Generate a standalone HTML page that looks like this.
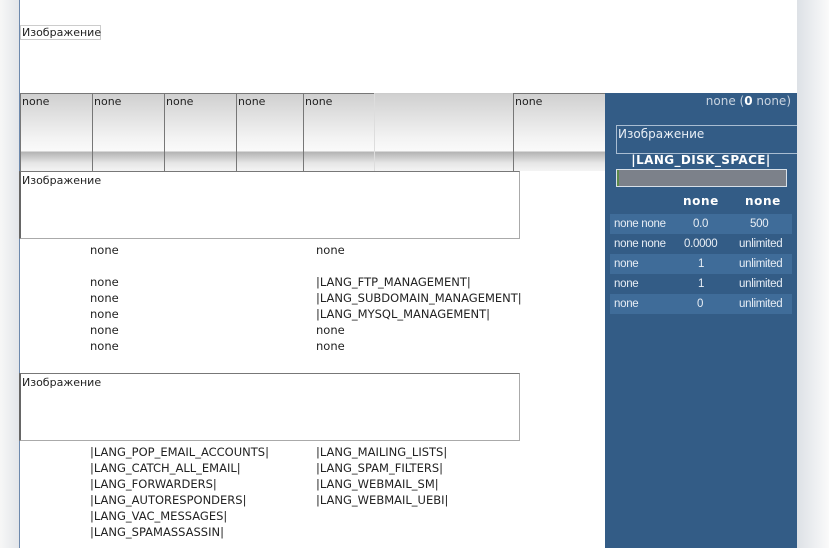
<!DOCTYPE html>
<html><head><meta charset="utf-8"><style>
*{margin:0;padding:0;box-sizing:border-box}
body{width:829px;height:548px;overflow:hidden;background:#f0f1f3;font-family:"DejaVu Sans","Liberation Sans",sans-serif;font-size:11.5px;color:#222;position:relative}
.a{position:absolute}
.page{left:19px;top:0;width:778px;height:548px;background:#fff;border-left:1px solid #6d89ad}
.bar{left:20px;top:93px;width:585px;height:78px;background:linear-gradient(#cfcfcf 0px,#f3f3f3 45px,#fafafa 58px,#b3b3b3 59px,#e6e6e6 70px,#f4f4f4 78px)}
.cell{top:93px;height:78px;border-left:1px solid #777;border-top:1px solid #777;padding:1px 1px;color:#222;font-size:11px}
.img{border:1px solid #aaa;border-left:2px solid #666;border-top:1px solid #777;padding:2px 1px;font-size:11px}
.panel{left:605px;top:93px;width:192px;height:455px;background:#335c86;color:#fff}
.row{left:5px;width:182px;height:20px;line-height:20px;font-family:"Liberation Sans",sans-serif;font-size:11.5px;color:#e8eef5;letter-spacing:-0.3px}
.row.l{background:#3f6c99}
.row span{position:absolute}
</style></head><body>
<div class="a" style="left:0;top:0;width:19px;height:548px;background:linear-gradient(90deg,#f7f7f7,#e3e6ea)"></div>
<div class="a" style="left:797px;top:0;width:32px;height:548px;background:linear-gradient(90deg,#dde1e6,#fafafa)"></div>
<div class="a page"></div>
<div class="a" style="left:20px;top:25px;width:81px;height:15px;border:1px solid #ccc;padding:0 1px;line-height:13px;font-size:11px">Изображение</div>
<div class="a bar"></div>
<div class="a cell" style="left:20px;width:72px">none</div>
<div class="a cell" style="left:92px;width:72px">none</div>
<div class="a cell" style="left:164px;width:72px">none</div>
<div class="a cell" style="left:236px;width:67px">none</div>
<div class="a cell" style="left:303px;width:71px">none</div>
<div class="a cell" style="left:374px;width:139px;border-left-color:#ddd;border-top-color:#ccc"></div>
<div class="a cell" style="left:513px;width:92px">none</div>
<div class="a img" style="left:19px;top:171px;width:501px;height:68px">Изображение</div>
<div class="a img" style="left:19px;top:373px;width:501px;height:68px">Изображение</div>
<div class="a" style="left:90px;top:242px;line-height:16px">none<br><br>none<br>none<br>none<br>none<br>none</div>
<div class="a" style="left:316px;top:242px;line-height:16px">none<br><br>|LANG_FTP_MANAGEMENT|<br>|LANG_SUBDOMAIN_MANAGEMENT|<br>|LANG_MYSQL_MANAGEMENT|<br>none<br>none</div>
<div class="a" style="left:90px;top:444px;line-height:16px">|LANG_POP_EMAIL_ACCOUNTS|<br>|LANG_CATCH_ALL_EMAIL|<br>|LANG_FORWARDERS|<br>|LANG_AUTORESPONDERS|<br>|LANG_VAC_MESSAGES|<br>|LANG_SPAMASSASSIN|</div>
<div class="a" style="left:316px;top:444px;line-height:16px">|LANG_MAILING_LISTS|<br>|LANG_SPAM_FILTERS|<br>|LANG_WEBMAIL_SM|<br>|LANG_WEBMAIL_UEBI|</div>
<div class="a panel">
<div class="a" style="right:6px;top:1px;color:#c9d4e0;font-size:12px">none (<b style="color:#fff">0</b> none)</div>
<div class="a" style="left:11px;top:32px;width:181px;height:29px;border:1px solid #a9bdd2;border-right:none;padding:1px 1px;color:#e8eef5;font-size:12px">Изображение</div>
<div class="a" style="left:0;width:192px;top:60px;text-align:center;font-weight:bold;font-size:12px;letter-spacing:0.4px">|LANG_DISK_SPACE|</div>
<div class="a" style="left:11px;top:76px;width:171px;height:18px;border:1px solid #d8e0e8;background:#7c818a"><div style="width:2px;height:16px;background:#5c8a4a"></div></div>
<div class="a" style="left:78px;top:101px;font-weight:bold;font-size:12px;letter-spacing:.6px">none</div>
<div class="a" style="left:140px;top:101px;font-weight:bold;font-size:12px;letter-spacing:.6px">none</div>
<div class="a row l" style="top:121px"><span style="left:4px">none none</span><span style="left:83px">0.0</span><span style="left:140px">500</span></div>
<div class="a row" style="top:141px"><span style="left:4px">none none</span><span style="left:74px">0.0000</span><span style="left:129px">unlimited</span></div>
<div class="a row l" style="top:161px"><span style="left:4px">none</span><span style="left:88px">1</span><span style="left:129px">unlimited</span></div>
<div class="a row" style="top:181px"><span style="left:4px">none</span><span style="left:88px">1</span><span style="left:129px">unlimited</span></div>
<div class="a row l" style="top:201px"><span style="left:4px">none</span><span style="left:87px">0</span><span style="left:129px">unlimited</span></div>
</div>
</body></html>
